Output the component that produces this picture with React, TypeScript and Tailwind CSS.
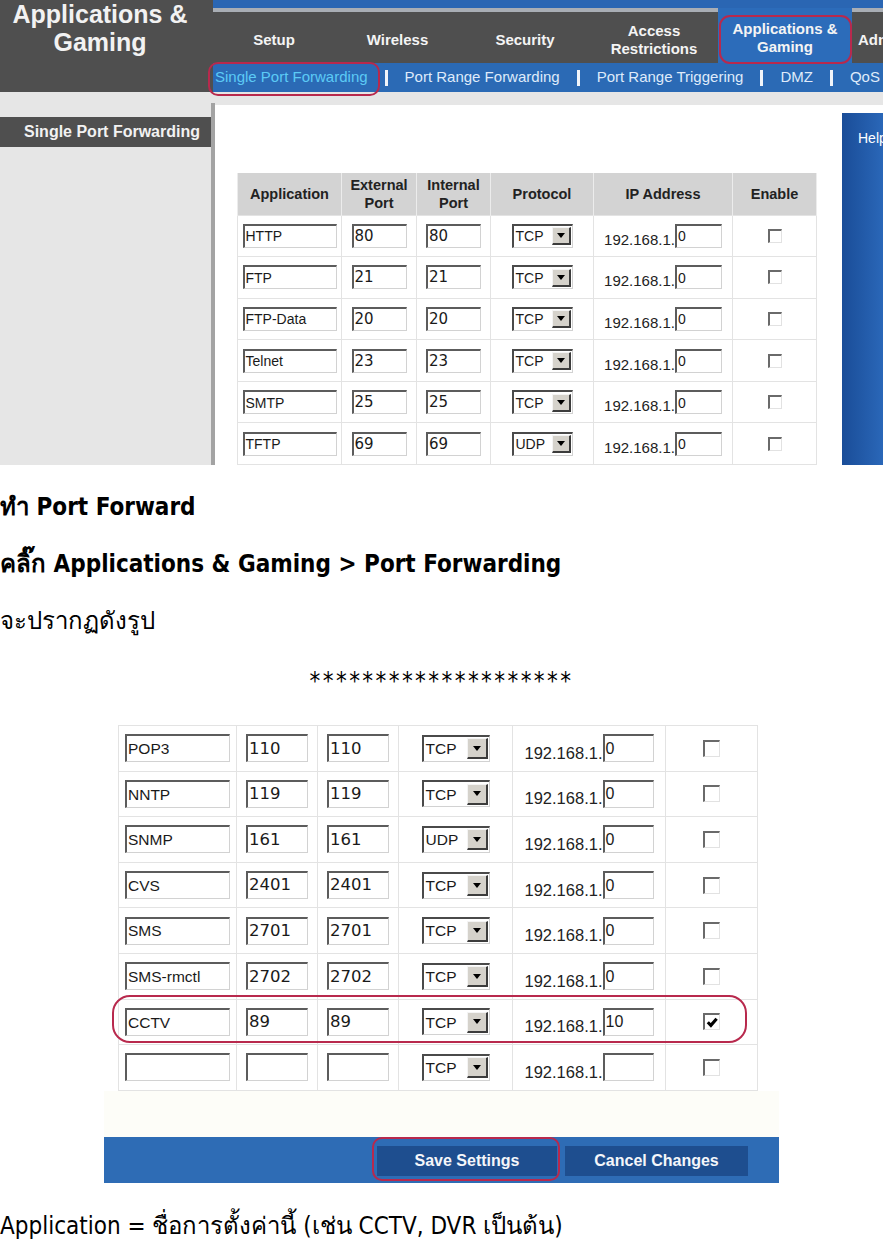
import React from "react";

type Size = "sm" | "lg";

const SZ = {
  sm: {
    cols: [104, 75, 74, 103, 139, 84],
    row: "h-[41.6px]",
    app: "w-[94px] h-[24px] text-[14px]",
    port: "w-[55px] h-[24px] text-[15px] font-['DejaVu_Sans',sans-serif]",
    sel: "w-[61px] h-[24px] text-[14px]",
    selBtn: "w-[19px]",
    ipText: "text-[15px] mb-[1px]",
    ip: "w-[47px] h-[24px] text-[14px]",
    chk: "w-[14px] h-[14px]",
  },
  lg: {
    cols: [118, 81, 81, 114, 153, 92],
    row: "h-[45.6px]",
    app: "w-[105px] h-[28px] text-[15.5px]",
    port: "w-[62px] h-[28px] text-[16.5px] font-['DejaVu_Sans',sans-serif]",
    sel: "w-[68px] h-[27px] text-[15.5px]",
    selBtn: "w-[21px]",
    ipText: "text-[16.5px] mb-[1px]",
    ip: "w-[51px] h-[28px] text-[16px]",
    chk: "w-[17px] h-[17px]",
  },
};

type Row = { app: string; ext: string; int: string; proto: string; ip: string; on?: boolean };

const top: Row[] = [
  { app: "HTTP", ext: "80", int: "80", proto: "TCP", ip: "0" },
  { app: "FTP", ext: "21", int: "21", proto: "TCP", ip: "0" },
  { app: "FTP-Data", ext: "20", int: "20", proto: "TCP", ip: "0" },
  { app: "Telnet", ext: "23", int: "23", proto: "TCP", ip: "0" },
  { app: "SMTP", ext: "25", int: "25", proto: "TCP", ip: "0" },
  { app: "TFTP", ext: "69", int: "69", proto: "UDP", ip: "0" },
];

const bottom: Row[] = [
  { app: "POP3", ext: "110", int: "110", proto: "TCP", ip: "0" },
  { app: "NNTP", ext: "119", int: "119", proto: "TCP", ip: "0" },
  { app: "SNMP", ext: "161", int: "161", proto: "UDP", ip: "0" },
  { app: "CVS", ext: "2401", int: "2401", proto: "TCP", ip: "0" },
  { app: "SMS", ext: "2701", int: "2701", proto: "TCP", ip: "0" },
  { app: "SMS-rmctl", ext: "2702", int: "2702", proto: "TCP", ip: "0" },
  { app: "CCTV", ext: "89", int: "89", proto: "TCP", ip: "10", on: true },
  { app: "", ext: "", int: "", proto: "TCP", ip: "" },
];

function Field({ cls, children }: { cls: string; children?: React.ReactNode }) {
  return (
    <div
      className={`flex items-center overflow-hidden whitespace-nowrap border-t-2 border-l-2 border-r border-b border-t-[#5c5c5c] border-l-[#5c5c5c] border-r-[#d2d2d2] border-b-[#d2d2d2] bg-white pl-[1px] leading-none text-[#1a1a1a] ${cls}`}
    >
      {children}
    </div>
  );
}

function Select({ value, size }: { value: string; size: Size }) {
  const s = SZ[size];
  return (
    <div
      className={`flex items-center border-t-2 border-l-2 border-r border-b border-t-[#4a4a4a] border-l-[#4a4a4a] border-r-[#d2d2d2] border-b-[#d2d2d2] bg-white leading-none text-[#1a1a1a] ${s.sel}`}
    >
      <span className="flex-1 pl-[2px]">{value}</span>
      <span
        className={`mr-[1px] flex h-[calc(100%-3px)] items-center justify-center border-t border-l border-r-2 border-b-2 border-t-[#f4f4f4] border-l-[#f4f4f4] border-r-[#3c3c3c] border-b-[#3c3c3c] bg-[#d5d2cb] ${s.selBtn}`}
      >
        <svg viewBox="0 0 8 5" className="h-[5px] w-[8px]">
          <path d="M0 0h8L4 5z" fill="#000" />
        </svg>
      </span>
    </div>
  );
}

function Check({ on, size }: { on?: boolean; size: Size }) {
  return (
    <div
      className={`flex items-center justify-center border-t-2 border-l-2 border-r border-b border-t-[#6a6a6a] border-l-[#6a6a6a] border-r-[#e2e2e2] border-b-[#e2e2e2] bg-white ${SZ[size].chk}`}
    >
      {on && (
        <svg viewBox="0 0 10 10" className="h-full w-full">
          <path d="M2 5.2 4.2 7.4 8.3 2.6" stroke="#000" strokeWidth="2.2" fill="none" />
        </svg>
      )}
    </div>
  );
}

function PortTable({ rows, size, head }: { rows: Row[]; size: Size; head?: boolean }) {
  const s = SZ[size];
  const td = "border border-[#e3e3e3] p-0 align-middle";
  return (
    <table className="table-fixed border-collapse font-['Liberation_Sans',Arial,sans-serif]">
      <colgroup>
        {s.cols.map((w, i) => (
          <col key={i} style={{ width: w }} />
        ))}
      </colgroup>
      {head && (
        <thead>
          <tr className="h-[42px] bg-[#d3d3d3] text-[14.5px] font-bold leading-[18px] text-[#222]">
            <th className="border-x border-[#ececec]">Application</th>
            <th className="border-x border-[#ececec]">
              External
              <br />
              Port
            </th>
            <th className="border-x border-[#ececec]">
              Internal
              <br />
              Port
            </th>
            <th className="border-x border-[#ececec]">Protocol</th>
            <th className="border-x border-[#ececec]">IP Address</th>
            <th className="border-x border-[#ececec]">Enable</th>
          </tr>
        </thead>
      )}
      <tbody>
        {rows.map((r, i) => (
          <tr key={i} className={s.row}>
            <td className={td}>
              <div className="flex justify-center">
                <Field cls={s.app}>{r.app}</Field>
              </div>
            </td>
            <td className={td}>
              <div className="flex justify-center">
                <Field cls={s.port}>{r.ext}</Field>
              </div>
            </td>
            <td className={td}>
              <div className="flex justify-center">
                <Field cls={s.port}>{r.int}</Field>
              </div>
            </td>
            <td className={td}>
              <div className="flex justify-center">
                <Select value={r.proto} size={size} />
              </div>
            </td>
            <td className={td}>
              <div className="flex items-end justify-center">
                <span className={`leading-none text-[#222] ${s.ipText}`}>192.168.1.</span>
                <Field cls={s.ip}>{r.ip}</Field>
              </div>
            </td>
            <td className={td}>
              <div className="flex justify-center">
                <Check on={r.on} size={size} />
              </div>
            </td>
          </tr>
        ))}
      </tbody>
    </table>
  );
}

function Outline({ cls }: { cls: string }) {
  return <div className={`pointer-events-none absolute border-2 border-[#b8294d] ${cls}`} />;
}

function Sep() {
  return <span className="h-[16px] w-[3px] bg-[#f0f4fa]" />;
}

function RouterTop() {
  const tabs = [
    { w: "w-[122px]", label: ["Setup"] },
    { w: "w-[125px]", label: ["Wireless"] },
    { w: "w-[130px]", label: ["Security"] },
    { w: "w-[128px]", label: ["Access", "Restrictions"] },
  ];
  return (
    <div className="relative h-[465px] w-[883px] overflow-hidden bg-[#e6e6e6] font-['Liberation_Sans',Arial,sans-serif]">
      <div className="flex h-[92px]">
        <div className="flex w-[213px] flex-col items-center bg-[#4f4f4f] pr-[13px] text-[25px] font-bold leading-[28px] text-[#f2f2f2]">
          <span>Applications &amp;</span>
          <span>Gaming</span>
        </div>
        <div className="flex min-w-0 flex-1 flex-col">
          <div className="h-[8px] bg-[#2a66b3]" />
          <div className="flex h-[55px] bg-[#4f4f4f] text-[15px] font-bold leading-[18px] text-[#f4f4f4]">
            {tabs.map((t) => (
              <div
                key={t.label[0]}
                className={`flex flex-col items-center justify-center border-t-[4px] border-[#a9aeb5] pt-[4px] ${t.w}`}
              >
                {t.label.map((l) => (
                  <span key={l}>{l}</span>
                ))}
              </div>
            ))}
            <div className="relative flex w-[134px] flex-col items-center justify-center bg-[#2c6cba] pt-[4px]">
              <span>Applications &amp;</span>
              <span>Gaming</span>
              <Outline cls="left-[1px] top-[7px] h-[49px] w-[133px] rounded-[11px]" />
            </div>
            <div className="flex flex-1 items-center overflow-hidden whitespace-nowrap border-t-[4px] border-[#a9aeb5] pl-[6px] pt-[4px]">
              Administration
            </div>
          </div>
          <div className="flex h-[29px] items-center gap-[17px] overflow-hidden whitespace-nowrap bg-[#2b6ab5] pl-[2px] text-[15px] text-[#dfeafa]">
            <span className="text-[#5ccaf5]">Single Port Forwarding</span>
            <Sep />
            <span>Port Range Forwarding</span>
            <Sep />
            <span>Port Range Triggering</span>
            <Sep />
            <span>DMZ</span>
            <Sep />
            <span>QoS</span>
          </div>
        </div>
      </div>
      <div className="flex h-[373px]">
        <div className="w-[211px] pt-[25px]">
          <div className="h-[30px] bg-[#4f4f4f] pr-[11px] text-right text-[16px] font-bold leading-[30px] text-[#f2f2f2]">
            Single Port Forwarding
          </div>
        </div>
        <div className="mt-[11px] w-[4px] bg-[#a3a3a3]" />
        <div className="mt-[13px] flex flex-1 bg-white">
          <div className="pl-[22px] pt-[68px]">
            <PortTable rows={top} size="sm" head />
          </div>
          <div className="ml-auto mt-[8px] w-[41px] bg-gradient-to-r from-[#1a4d98] to-[#2a67b8] pl-[16px] pt-[17px] text-[14px] leading-[16px] text-white">
            Help
          </div>
        </div>
      </div>
      <Outline cls="left-[208px] top-[62px] h-[34px] w-[172px] rounded-[10px]" />
    </div>
  );
}

function RouterBottom() {
  return (
    <div className="relative ml-[104px] flex h-[465px] w-[675px] flex-col bg-white font-['Liberation_Sans',Arial,sans-serif]">
      <div className="h-[7px]" />
      <div className="pl-[14px]">
        <PortTable rows={bottom} size="lg" />
      </div>
      <div className="flex-1 bg-[#fdfdf8]" />
      <div className="flex h-[46px] justify-end gap-[8px] bg-[#2e6cb5] pr-[31px] pt-[9px] text-[16px] font-bold text-[#f4f6fa]">
        <div className="flex h-[30px] w-[180px] items-center justify-center bg-[#1e4e8f]">Save Settings</div>
        <div className="flex h-[30px] w-[183px] items-center justify-center bg-[#1e4e8f]">Cancel Changes</div>
      </div>
      <Outline cls="left-[8px] top-[277px] h-[48px] w-[635px] rounded-[18px]" />
      <Outline cls="left-[268px] top-[419px] h-[44px] w-[188px] rounded-[10px]" />
    </div>
  );
}

export default function App() {
  return (
    <div className="h-[1240px] w-[883px] overflow-hidden bg-white text-black">
      <RouterTop />
      <div className="font-stretch-condensed font-['DejaVu_Sans_Condensed','DejaVu_Sans',sans-serif] text-[24px]">
        <p className="mt-[14px] h-[57px] font-bold leading-[57px]">ทำ Port Forward</p>
        <p className="h-[57px] font-bold leading-[57px]">คลิ๊ก Applications &amp; Gaming &gt; Port Forwarding</p>
        <p className="h-[57px] leading-[57px]">จะปรากฏดังรูป</p>
        <p className="h-[57px] pt-[3px] text-center leading-[57px] tracking-[2.4px]">********************</p>
      </div>
      <div className="mt-[11px]">
        <RouterBottom />
      </div>
      <p className="mt-[15px] h-[57px] font-stretch-condensed font-['DejaVu_Sans_Condensed','DejaVu_Sans',sans-serif] text-[24px] leading-[57px]">
        Application = ชื่อการตั้งค่านี้ (เช่น CCTV, DVR เป็นต้น)
      </p>
    </div>
  );
}
